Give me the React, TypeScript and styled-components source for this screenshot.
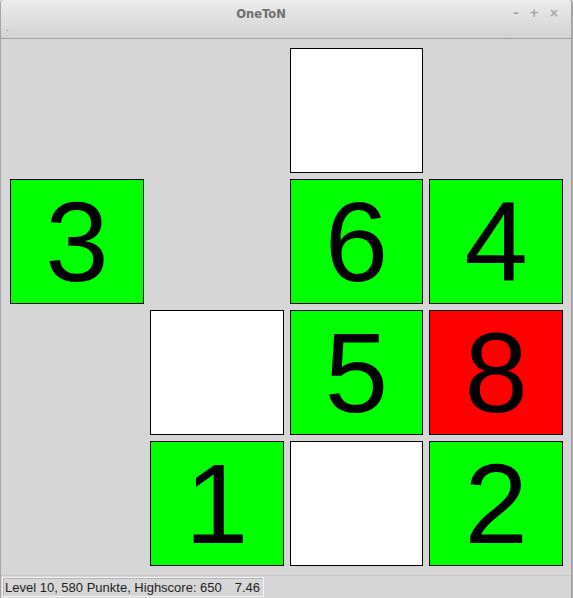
import React from "react";
import styled, { createGlobalStyle } from "styled-components";

const Global = createGlobalStyle`
  html, body { margin: 0; padding: 0; background: #d6d6d6; }
  * { box-sizing: border-box; }
`;

const Window = styled.div`
  width: 573px;
  height: 598px;
  display: flex;
  flex-direction: column;
  background: #d6d6d6;
  border-left: 1px solid #a4a4a4;
  border-right: 2px solid #a4a4a4;
  border-top-left-radius: 4px;
  border-top-right-radius: 4px;
  overflow: hidden;
  font-family: "Liberation Sans", Arial, sans-serif;
`;

const TitleBar = styled.div`
  height: 39px;
  flex: none;
  position: relative;
  display: flex;
  align-items: flex-start;
  justify-content: center;
  background: linear-gradient(#ececec, #d2d2d2);
  border-bottom: 1px solid #9e9e9e;
`;

const Title = styled.div`
  margin-top: 5px;
  margin-right: 50px;
  font-family: "DejaVu Sans", sans-serif;
  font-weight: bold;
  font-size: 11.5px;
  line-height: 18px;
  color: #6f6f6f;
`;

const Controls = styled.div`
  position: absolute;
  right: 12px;
  top: 6px;
  display: flex;
  gap: 10px;
  font-family: "DejaVu Sans", sans-serif;
  font-size: 12px;
  font-weight: bold;
  color: #a2a2a2;
`;

const Grip = styled.div`
  position: absolute;
  left: 5px;
  top: 23px;
  font-size: 10px;
  color: #8a8a8a;
  line-height: 10px;
`;

const Content = styled.div`
  flex: 1;
  padding: 9px 8px 0 9px;
`;

const Board = styled.div`
  display: grid;
  grid-template-columns: repeat(4, 1fr);
  grid-template-rows: repeat(4, 125px);
  gap: 6px;
  width: 553px;
`;

const Cell = styled.div<{ $bg?: string }>`
  display: flex;
  align-items: center;
  justify-content: center;
  background: ${(p) => p.$bg ?? "transparent"};
  border: ${(p) => (p.$bg ? "1px solid #000" : "none")};
  font-family: "Liberation Sans", Arial, sans-serif;
  font-size: 114px;
  line-height: 1;
  color: #000;
`;

const StatusBar = styled.div`
  height: 23px;
  flex: none;
  padding: 1px 0 2px 1px;
  border-top: 1px solid #c8c8c8;
  display: flex;
`;

const StatusLabel = styled.div`
  width: 262px;
  height: 20px;
  display: flex;
  justify-content: space-between;
  align-items: center;
  padding: 0 3px 0 2px;
  border: 1px solid #f2f2f2;
  box-shadow: inset 1px 1px 0 #b4b4b4;
  font-family: "Liberation Sans", Arial, sans-serif;
  font-size: 13px;
  color: #1e1e1e;
`;

type C = { n?: string; bg?: string };
const G = "#00ff00";
const R = "#ff0000";
const W = "#ffffff";

const cells: C[] = [
  {}, {}, { bg: W }, {},
  { n: "3", bg: G }, {}, { n: "6", bg: G }, { n: "4", bg: G },
  {}, { bg: W }, { n: "5", bg: G }, { n: "8", bg: R },
  {}, { n: "1", bg: G }, { bg: W }, { n: "2", bg: G },
];

export default function App() {
  return (
    <>
      <Global />
      <Window>
        <TitleBar>
          <Grip>.</Grip>
          <Title>OneToN</Title>
          <Controls>
            <span>–</span>
            <span>+</span>
            <span>×</span>
          </Controls>
        </TitleBar>
        <Content>
          <Board>
            {cells.map((c, i) => (
              <Cell key={i} $bg={c.bg}>
                {c.n}
              </Cell>
            ))}
          </Board>
        </Content>
        <StatusBar>
          <StatusLabel>
            <span>Level 10, 580 Punkte, Highscore: 650</span>
            <span>7.46</span>
          </StatusLabel>
        </StatusBar>
      </Window>
    </>
  );
}
